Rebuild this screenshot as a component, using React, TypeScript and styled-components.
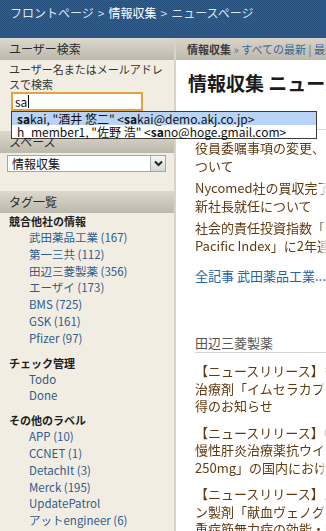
import styled, { createGlobalStyle } from "styled-components";

const GlobalStyle = createGlobalStyle`
  html, body {
    margin: 0;
    padding: 0;
    background: #ffffff;
  }

  body {
    font-family: "Noto Sans CJK JP", "Liberation Sans", sans-serif;
    overflow: hidden;
  }
`;

const tagGroups = [
  {
    title: "競合他社の情報",
    items: [
      "武田薬品工業 (167)",
      "第一三共 (112)",
      "田辺三菱製薬 (356)",
      "エーザイ (173)",
      "BMS (725)",
      "GSK (161)",
      "Pfizer (97)",
    ],
  },
  { title: "チェック管理", items: ["Todo", "Done"] },
  {
    title: "その他のラベル",
    items: [
      "APP (10)",
      "CCNET (1)",
      "DetachIt (3)",
      "Merck (195)",
      "UpdatePatrol",
      "アットengineer (6)",
    ],
  },
];

const feeds = [
  {
    name: "武田薬品工業",
    gap: 5,
    more: "全記事 武田薬品工業...",
    items: [
      ["役員委嘱事項の変更、および人事異動に", "ついて"],
      ["Nycomed社の買収完了および同社の", "新社長就任について"],
      ["社会的責任投資指数「Dow Jones Sustainability Asia", "Pacific Index」に2年連続で選定"],
    ],
  },
  {
    name: "田辺三菱製薬",
    gap: 9,
    more: "",
    items: [
      ["【ニュースリリース】多発性硬化症", "治療剤「イムセラカプセル0.5mg」承認取", "得のお知らせ"],
      ["【ニュースリリース】C型", "慢性肝炎治療薬抗ウイルス剤「テラビック錠", "250mg」の国内における製造販売承認取得"],
      ["【ニュースリリース】人免疫グロブリ", "ン製剤「献血ヴェノグロブリンIH」の", "重症筋無力症の効能・効果追加承認取得"],
    ],
  },
];

function Highlight({ text }: { text: string }) {
  // bold the typed "sa" wherever a word starts with it
  const parts = text.split(/(\bsa)/);
  return (
    <>
      {parts.map((p, i) => (p === "sa" ? <b key={i}>sa</b> : <span key={i}>{p}</span>))}
    </>
  );
}

export default function App() {
  return (
    <Page>
      <GlobalStyle />
      <TopBar>
        <Crumb>フロントページ</Crumb>
        <Sep>&gt;</Sep>
        <Crumb $current>情報収集</Crumb>
        <Sep>&gt;</Sep>
        <Crumb>ニュースページ</Crumb>
      </TopBar>

      <Layout>
        <Sidebar>
          <SideHead>ユーザー検索</SideHead>
          <SearchBlock>
            <Hint>ユーザー名またはメールアドレスで検索</Hint>
            <InputWrap>
              <SearchInput>
                sa<Caret />
              </SearchInput>
              <Suggest>
                <SuggestRow $active>
                  <Highlight text={'sakai, "酒井 悠二" <sakai@demo.akj.co.jp>'} />
                </SuggestRow>
                <SuggestRow>
                  <Highlight text={'h_member1, "佐野 浩" <sano@hoge.gmail.com>'} />
                </SuggestRow>
              </Suggest>
            </InputWrap>
          </SearchBlock>

          <SideHead $mt={20}>スペース</SideHead>
          <FakeSelect>
            <span>情報収集</span>
            <SelectButton>
              <svg width="11" height="11" viewBox="0 0 11 11">
                <polyline points="2,3.5 5.5,7 9,3.5" fill="none" stroke="#222" strokeWidth="2" />
              </svg>
            </SelectButton>
          </FakeSelect>

          <SideHead $mt={19}>タグ一覧</SideHead>
          <TagList>
            {tagGroups.map((g, gi) => (
              <TagGroup key={g.title} $first={gi === 0}>
                <GroupTitle>{g.title}</GroupTitle>
                {g.items.map((t) => (
                  <TagLink key={t}>{t}</TagLink>
                ))}
              </TagGroup>
            ))}
          </TagList>
        </Sidebar>

        <Main>
          <SubHead>
            <b>情報収集</b>
            <Dim> » </Dim>
            <SubLink>すべての最新</SubLink>
            <Dim> | </Dim>
            <SubLink>最新のブックマーク</SubLink>
          </SubHead>
          <PageTitle>情報収集 ニュースページ</PageTitle>

          <Feeds>
            {feeds.map((f, fi) => (
              <Feed key={f.name} $first={fi === 0}>
                <FeedName>{f.name}</FeedName>
                <NewsList $gap={f.gap}>
                  {f.items.map((lines, i) => (
                    <NewsItem key={i}>
                      {lines.map((l, li) => (
                        <NewsLine key={li}>{l}</NewsLine>
                      ))}
                    </NewsItem>
                  ))}
                </NewsList>
                {f.more && <MoreLink>{f.more}</MoreLink>}
              </Feed>
            ))}
          </Feeds>
        </Main>
      </Layout>
    </Page>
  );
}

const Page = styled.div`
  width: 326px;
  height: 531px;
  overflow: hidden;
`;

const TopBar = styled.header`
  height: 38px;
  box-sizing: border-box;
  padding: 5px 10px 0;
  background: repeating-conic-gradient(#2e5d8f 0 25%, #26517f 0 50%) 0 0 / 2px 2px;
  color: #dfe7f0;
  font-size: 12px;
  line-height: 16px;
  white-space: nowrap;
`;

const Crumb = styled.span<{ $current?: boolean }>`
  color: ${(p) => (p.$current ? "#ffffff" : "#dde5ee")};
`;

const Sep = styled.span`
  margin: 0 4px;
  color: #cfd9e4;
`;

const Layout = styled.div`
  display: flex;
  align-items: stretch;
  height: 493px;
`;

const Sidebar = styled.aside`
  width: 174px;
  flex: none;
  background: #f2ede3;
  border-right: 2px solid #d8d3c9;
  position: relative;
  z-index: 2;
`;

const SideHead = styled.div<{ $mt?: number }>`
  margin-top: ${(p) => p.$mt || 0}px;
  height: 22px;
  line-height: 22px;
  padding-left: 9px;
  background: linear-gradient(#dcd8cd, #bcb8ab);
  color: #2b2b2b;
  font-size: 12px;
`;

const SearchBlock = styled.div`
  padding: 2px 9px 0;
`;

const Hint = styled.div`
  font-size: 11px;
  line-height: 15px;
  color: #333;
`;

const InputWrap = styled.div`
  position: relative;
  margin-left: 2px;
`;

const SearchInput = styled.div`
  width: 132px;
  height: 19px;
  box-sizing: border-box;
  border: 2px solid #e3a343;
  background: #fff;
  padding-left: 2px;
  font-size: 12px;
  line-height: 15px;
  color: #111;
  display: flex;
  align-items: center;
`;

const Caret = styled.span`
  display: inline-block;
  width: 1px;
  height: 13px;
  margin-left: 1px;
  background: #000;
`;

const Suggest = styled.div`
  position: absolute;
  top: 19px;
  left: 0;
  width: 304px;
  background: #fff;
  border: 1px solid #3c3c3c;
  z-index: 10;
`;

const SuggestRow = styled.div<{ $active?: boolean }>`
  height: 13px;
  line-height: 13px;
  padding-left: 5px;
  font-size: 12px;
  color: #111;
  white-space: nowrap;
  background: ${(p) => (p.$active ? "#b9d3f6" : "#fff")};

  b {
    font-weight: 700;
  }
`;

const FakeSelect = styled.div`
  margin: 2px 0 0 7px;
  width: 159px;
  height: 17px;
  box-sizing: border-box;
  border: 1px solid #a5a5a5;
  background: #fff;
  display: flex;
  align-items: center;
  justify-content: space-between;
  padding-left: 4px;
  font-size: 12px;
  color: #111;
`;

const SelectButton = styled.div`
  width: 15px;
  height: 15px;
  box-sizing: border-box;
  border-left: 1px solid #b0b0b0;
  background: linear-gradient(#f7f7f7, #d6d6d6);
  display: flex;
  align-items: center;
  justify-content: center;
`;

const TagList = styled.div`
  padding-left: 9px;
`;

const TagGroup = styled.div<{ $first?: boolean }>`
  margin-top: ${(p) => (p.$first ? 0 : 8)}px;
`;

const GroupTitle = styled.div`
  font-size: 11px;
  font-weight: 700;
  line-height: 16px;
  color: #1e1e1e;
`;

const TagLink = styled.a`
  display: block;
  padding-left: 20px;
  font-size: 11.5px;
  line-height: 16.8px;
  color: #2f5c8e;
  white-space: nowrap;
`;

const Main = styled.main`
  flex: none;
  width: 600px;
  background: #fff;
`;

const SubHead = styled.div`
  height: 22px;
  line-height: 22px;
  padding-left: 11px;
  background: linear-gradient(#d8d4c9, #bdb9ac);
  font-size: 11px;
  white-space: nowrap;
  color: #3a3a3a;

  b {
    font-weight: 700;
    color: #3c3c3c;
  }
`;

const Dim = styled.span`
  color: #6a6a6a;
`;

const SubLink = styled.a`
  color: #3d6694;
`;

const PageTitle = styled.h1`
  margin: 11px 0 0 12px;
  font-size: 19px;
  line-height: 24px;
  font-weight: 700;
  color: #1b1b1b;
  white-space: nowrap;
`;

const Feeds = styled.div`
  padding-left: 19px;
`;

const Feed = styled.section<{ $first?: boolean }>`
  margin-top: ${(p) => (p.$first ? 16 : 49.5)}px;
`;

const FeedName = styled.div`
  font-size: 13px;
  line-height: 18px;
  color: #555;
  border-bottom: 1px solid #d6d6d6;
`;

const NewsList = styled.div<{ $gap: number }>`
  margin-top: 9px;
  display: flex;
  flex-direction: column;
  gap: ${(p) => p.$gap}px;
  -webkit-mask-image: linear-gradient(to right, #000 125px, rgba(0, 0, 0, 0.25) 129px);
  mask-image: linear-gradient(to right, #000 125px, rgba(0, 0, 0, 0.25) 129px);
`;

const NewsItem = styled.a`
  display: block;
  color: #633a10;
  font-size: 13px;
  line-height: 17.5px;
`;

const NewsLine = styled.span`
  display: block;
  white-space: nowrap;
`;

const MoreLink = styled.a`
  display: block;
  margin-top: 13px;
  font-size: 13px;
  line-height: 17.5px;
  color: #2461a6;
  white-space: nowrap;
`;
